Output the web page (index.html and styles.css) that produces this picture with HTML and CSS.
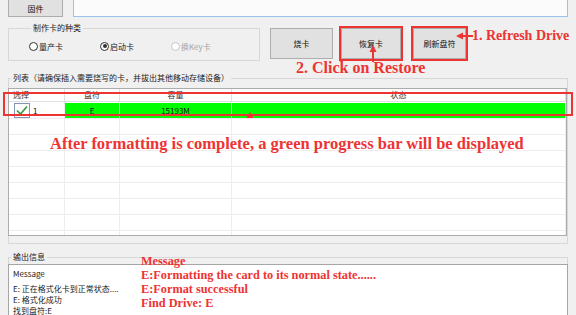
FILE: index.html
```html
<!DOCTYPE html>
<html lang="zh-CN">
<head>
  <meta charset="UTF-8">
  <title>烧卡工具</title>
  <link rel="stylesheet" href="styles.css">
</head>
<body>
<div class="app">

  <div class="toprow">
    <button class="btn fw">固件</button>
    <div class="path"></div>
  </div>

  <div class="midrow">
    <fieldset class="group kind">
      <legend>制作卡的种类</legend>
      <div class="radios">
        <span class="radio"><i></i>量产卡</span>
        <span class="radio on"><i></i>启动卡</span>
        <span class="radio off"><i></i>换Key卡</span>
      </div>
    </fieldset>
    <div class="actions">
      <button class="btn act">烧卡</button>
      <button class="btn act mark restore">恢复卡</button>
      <button class="btn act mark refresh">刷新盘符</button>
    </div>
  </div>

  <fieldset class="group listgroup">
    <legend>列表（请确保插入需要烧写的卡，并拔出其他移动存储设备）</legend>
    <div class="list">
      <div class="row head"><span>选择</span><span>盘符</span><span>容量</span><span>状态</span></div>
      <div class="row item">
        <span class="sel">
          <b class="box"><svg width="14" height="13" viewBox="0 0 14 13"><path d="M2 6.5 L5.5 10 L12 2.5" fill="none" stroke="#3a9a3a" stroke-width="1.7"/></svg></b>1
        </span>
        <span class="ok">E</span><span class="ok">15193M</span><span class="ok"></span>
      </div>
      <div class="row"><span></span><span></span><span></span><span></span></div>
      <div class="row"><span></span><span></span><span></span><span></span></div>
      <div class="row"><span></span><span></span><span></span><span></span></div>
      <div class="row"><span></span><span></span><span></span><span></span></div>
      <div class="row"><span></span><span></span><span></span><span></span></div>
      <div class="row"><span></span><span></span><span></span><span></span></div>
      <div class="row"><span></span><span></span><span></span><span></span></div>
      <div class="row"><span></span><span></span><span></span><span></span></div>
    </div>
  </fieldset>

  <fieldset class="group outgroup">
    <legend>输出信息</legend>
    <div class="log">
      <p class="first">Message</p>
      <p>E: 正在格式化卡到正常状态....</p>
      <p>E: 格式化成功</p>
      <p>找到盘符:E</p>
    </div>
  </fieldset>

  <!-- annotations drawn over the screenshot -->
  <svg class="arrow a1" width="18" height="10" viewBox="0 0 18 10">
    <polygon points="1,5 8,1.5 8,8.5" fill="#ee3333"/>
    <line x1="7" y1="5" x2="18" y2="5" stroke="#ee3333" stroke-width="2"/>
  </svg>
  <div class="note n1">1. Refresh Drive</div>

  <svg class="arrow a2" width="10" height="18" viewBox="0 0 10 18">
    <polygon points="5,1 1.5,8 8.5,8" fill="#ee3333"/>
    <line x1="5" y1="7" x2="5" y2="18" stroke="#ee3333" stroke-width="2"/>
  </svg>
  <div class="note n2">2. Click on Restore</div>

  <div class="rowmark"></div>
  <svg class="arrow a3" width="8" height="8" viewBox="0 0 8 8">
    <polygon points="4,1 0.5,7 7.5,7" fill="#ee3333"/>
  </svg>
  <div class="note n3">After formatting is complete, a green progress bar will be displayed</div>

  <div class="note n4">
    <p>Message</p>
    <p>E:Formatting the card to its normal state......</p>
    <p>E:Format successful</p>
    <p>Find Drive: E</p>
  </div>

</div>
</body>
</html>
```

FILE: styles.css
```css
* { box-sizing: border-box; }
html, body { margin: 0; height: 100%; overflow: hidden; }
body {
  background: #f0f0f0; color: #1a1a1a;
  font-family: "Noto Sans CJK SC", "Noto Sans", sans-serif; font-size: 8px;
}
p { margin: 0; }
.app { position: relative; padding: 0 8px; }

.btn {
  font: inherit; color: #111; padding: 0; cursor: pointer;
  background: #e1e1e1; border: 1px solid #adadad;
}

/* top row */
.toprow { display: flex; gap: 10px; height: 23px; margin-top: -6px; }
.fw { width: 55px; padding-top: 5px; }
.path { flex: 1; background: #fbfbfb; border: 1px solid #99c2ec; }

/* group boxes */
.group { margin: 0; padding: 0; min-width: 0; border: 1px solid #d7d7d7; }
.group legend { margin-left: 2px; padding: 0 2px; line-height: 12px; }

.midrow { display: flex; align-items: flex-end; margin-top: 5px; }
.kind { width: 252px; padding: 6px 0 8px 20px; }
.radios { display: flex; height: 12px; align-items: center; }
.radio { width: 71px; display: flex; align-items: center; gap: 1px; }
.radio i {
  width: 9px; height: 9px; border: 1px solid #333; border-radius: 50%; background: #fff;
  display: flex; align-items: center; justify-content: center;
}
.radio.on i::after { content: ""; width: 4px; height: 4px; border-radius: 50%; background: #333; }
.radio.off { color: #a6a6a6; }
.radio.off i { border-color: #c4c4c4; }

.actions { display: flex; gap: 8px; margin-left: 10px; margin-bottom: 2px; }
.act { width: 63px; height: 31px; }
.mark { outline: 2px solid #ee3333; outline-offset: 0; }
.restore { width: 60px; }
.refresh { width: 53px; margin-left: 4px; }

/* list view */
.listgroup { margin-top: 11px; padding-bottom: 7px; }
.list {
  margin: 4px 0 0 -1px; height: 148px; overflow: hidden;
  background: #fff; border: 1px solid #acacac;
}
.row { display: grid; grid-template-columns: 56px 55px 112px 1fr; height: 16px; }
.row span { border-right: 1px solid #ededed; border-bottom: 1px solid #ededed; }
.head { height: 13px; line-height: 12px; text-align: center; color: #333; }
.head span { border-color: #e0e0e0; }
.head span:first-child { text-align: left; padding-left: 4px; }
.item { height: 17px; line-height: 15px; text-align: center; color: #111; }
.item .sel { display: flex; align-items: center; gap: 3px; padding-left: 5px; text-align: left; }
.box {
  width: 16px; height: 15px; border: 1px solid #8296b4; background: #fff;
  display: flex; align-items: center; justify-content: center;
}
.ok { background: #00ff00; border-top: 1px solid #fff; }

/* output */
.outgroup { margin-top: 7px; }
.log {
  margin: 1px -1px 0; height: 80px; padding: 3px 4px;
  background: #fff; border: 1px solid #a6a6a6; line-height: 11px; color: #222;
}
.log .first { margin-bottom: 4px; }

/* red annotations */
.note {
  position: absolute; color: #ee3333; white-space: nowrap;
  font-family: "Liberation Serif", serif; font-weight: bold;
}
.arrow { position: absolute; }
.a1 { left: 455px; top: 37px; }
.n1 { left: 472px; top: 34px; font-size: 14px; line-height: 16px; }
.a2 { left: 368px; top: 50px; }
.n2 { left: 296px; top: 65px; font-size: 16px; line-height: 18px; }
.rowmark { position: absolute; left: 3px; top: 98px; width: 570px; height: 24px; border: 2px solid #ee3333; }
.a3 { left: 246px; top: 117px; }
.n3 { left: 50px; top: 141px; font-size: 16.5px; line-height: 18px; }
.n4 { left: 141px; top: 260px; font-size: 12.3px; line-height: 14px; }
```
